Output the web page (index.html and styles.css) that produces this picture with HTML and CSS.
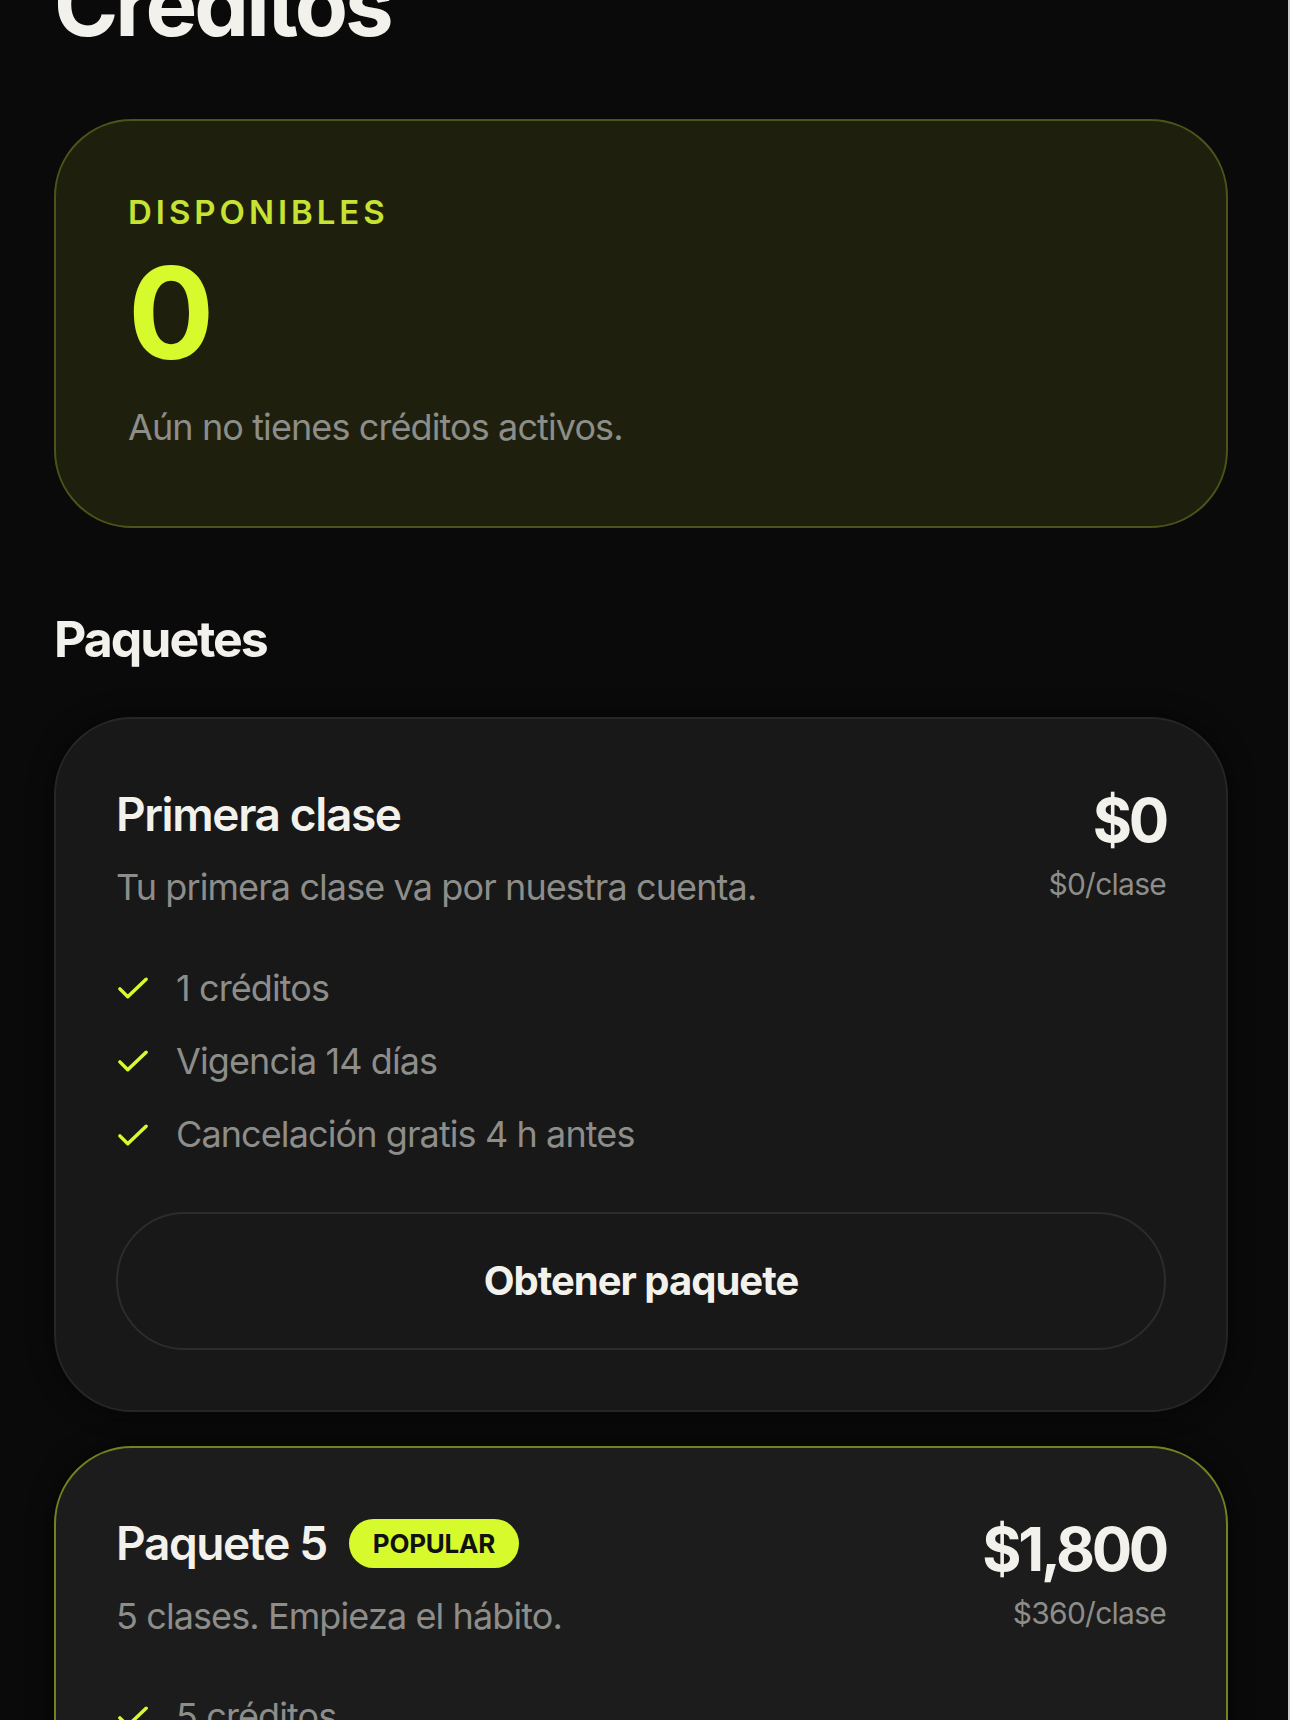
FILE: index.html
```html
<!DOCTYPE html>
<html lang="es">
<head>
  <meta charset="UTF-8" />
  <meta name="viewport" content="width=device-width, initial-scale=1.0"/>
  <title>Créditos</title>
  <link rel="stylesheet" href="styles.css">
</head>
<body>
  <main class="page">
    <h1 class="title">Créditos</h1>

    <!-- SALDO DISPONIBLE -->
    <section class="balance">
      <p class="balance-label">DISPONIBLES</p>
      <p class="balance-count">0</p>
      <p class="balance-note">Aún no tienes créditos activos.</p>
    </section>

    <h2 class="section-title">Paquetes</h2>

    <!-- PAQUETE: primera clase -->
    <article class="pack">
      <div class="pack-head">
        <div class="pack-info">
          <h3 class="pack-name">Primera clase</h3>
          <p class="pack-desc">Tu primera clase va por nuestra cuenta.</p>
        </div>
        <div class="pack-price">
          <p class="price">$0</p>
          <p class="per-class">$0/clase</p>
        </div>
      </div>
      <ul class="features">
        <li><svg class="check" viewBox="0 0 24 24"><path d="M4.5 12.5l4.5 4.5L19.5 7"/></svg>1 créditos</li>
        <li><svg class="check" viewBox="0 0 24 24"><path d="M4.5 12.5l4.5 4.5L19.5 7"/></svg>Vigencia 14 días</li>
        <li><svg class="check" viewBox="0 0 24 24"><path d="M4.5 12.5l4.5 4.5L19.5 7"/></svg>Cancelación gratis 4 h antes</li>
      </ul>
      <button class="pack-btn">Obtener paquete</button>
    </article>

    <!-- PAQUETE: 5 clases (destacado) -->
    <article class="pack pack--popular">
      <div class="pack-head">
        <div class="pack-info">
          <h3 class="pack-name">Paquete 5 <span class="badge">POPULAR</span></h3>
          <p class="pack-desc">5 clases. Empieza el hábito.</p>
        </div>
        <div class="pack-price">
          <p class="price">$1,800</p>
          <p class="per-class">$360/clase</p>
        </div>
      </div>
      <ul class="features">
        <li><svg class="check" viewBox="0 0 24 24"><path d="M4.5 12.5l4.5 4.5L19.5 7"/></svg>5 créditos</li>
        <li><svg class="check" viewBox="0 0 24 24"><path d="M4.5 12.5l4.5 4.5L19.5 7"/></svg>Vigencia 60 días</li>
        <li><svg class="check" viewBox="0 0 24 24"><path d="M4.5 12.5l4.5 4.5L19.5 7"/></svg>Cancelación gratis 4 h antes</li>
      </ul>
      <button class="pack-btn">Obtener paquete</button>
    </article>
  </main>
</body>
</html>
```

FILE: styles.css
```css
/* reset */
* {
  margin: 0;
  padding: 0;
  box-sizing: border-box;
}

html {
  border-right: 2px solid #cfcfcf; /* barra de scroll */
}

body {
  background: #0a0a0a;
  color: #f3f1ec;
  font-family: "Inter", "Noto Sans", sans-serif;
  height: 1720px;
  overflow: hidden;
}

.page {
  width: 1174px;
  margin-left: 54px;
}

/* titulo principal, cortado arriba */
.title {
  font-size: 87px;
  font-weight: 700;
  line-height: 1;
  letter-spacing: -0.035em;
  margin-top: -39px;
  margin-bottom: 71px;
}

/* tarjeta de saldo */
.balance {
  background: #1e200d;
  border: 2px solid #4b5519;
  border-radius: 78px;
  padding: 72px 72px 74px;
}

.balance-label {
  color: #c6e232;
  font-size: 33px;
  font-weight: 600;
  letter-spacing: 0.12em;
  line-height: 1.2;
}

.balance-count {
  color: #d6fa2c;
  font-size: 128px;
  font-weight: 700;
  line-height: 1;
  margin-top: 16px;
}

.balance-note {
  color: #8d8d8a;
  font-size: 36px;
  line-height: 1.4;
  letter-spacing: -0.025em;
  margin-top: 25px;
}

.section-title {
  font-size: 50px;
  font-weight: 700;
  line-height: 1.2;
  letter-spacing: -0.04em;
  margin-top: 81px;
  margin-bottom: 48px;
}

/* tarjetas de paquetes */
.pack {
  background: #181818;
  border: 2px solid #262626;
  border-radius: 78px;
  padding: 68px 60px 60px;
  margin-bottom: 34px;
  box-shadow: 0 0 24px rgba(0, 0, 0, 0.6);
}

.pack--popular {
  background: #1c1c1c;
  border-color: #6f8420;
}

.pack-head {
  display: flex;
  justify-content: space-between;
  align-items: flex-start;
}

.pack-name {
  display: flex;
  align-items: center;
  gap: 22px;
  font-size: 46px;
  font-weight: 600;
  line-height: 1.2;
  letter-spacing: -0.03em;
}

.badge {
  background: #d6fa2c;
  color: #111;
  font-size: 26px;
  font-weight: 700;
  letter-spacing: -0.01em;
  line-height: 49px;
  padding: 0 24px;
  border-radius: 25px;
}

.pack-desc {
  color: #8d8d8a;
  font-size: 36px;
  line-height: 1.4;
  letter-spacing: -0.025em;
  margin-top: 20px;
}

.pack-price {
  text-align: right;
}

.price {
  font-size: 60px;
  font-weight: 700;
  line-height: 1.1;
  letter-spacing: -0.055em;
}

.per-class {
  color: #8d8d8a;
  font-size: 30px;
  line-height: 1.4;
  letter-spacing: -0.025em;
  margin-top: 10px;
}

.features {
  list-style: none;
  display: flex;
  flex-direction: column;
  gap: 23px;
  margin-top: 50px;
}

.features li {
  display: flex;
  align-items: center;
  gap: 22px;
  color: #8d8d8a;
  font-size: 36px;
  line-height: 1.4;
  letter-spacing: -0.025em;
}

.check {
  width: 42px;
  height: 42px;
  margin-left: -4px;
  fill: none;
  stroke: #d6fa2c;
  stroke-width: 2;
  stroke-linecap: round;
  stroke-linejoin: round;
}

.pack-btn {
  display: block;
  width: 100%;
  height: 138px;
  margin-top: 52px;
  background: transparent;
  border: 2px solid #2c2c2c;
  border-radius: 69px;
  color: #f3f1ec;
  font-family: inherit;
  font-size: 40px;
  font-weight: 700;
  letter-spacing: -0.025em;
}
```
